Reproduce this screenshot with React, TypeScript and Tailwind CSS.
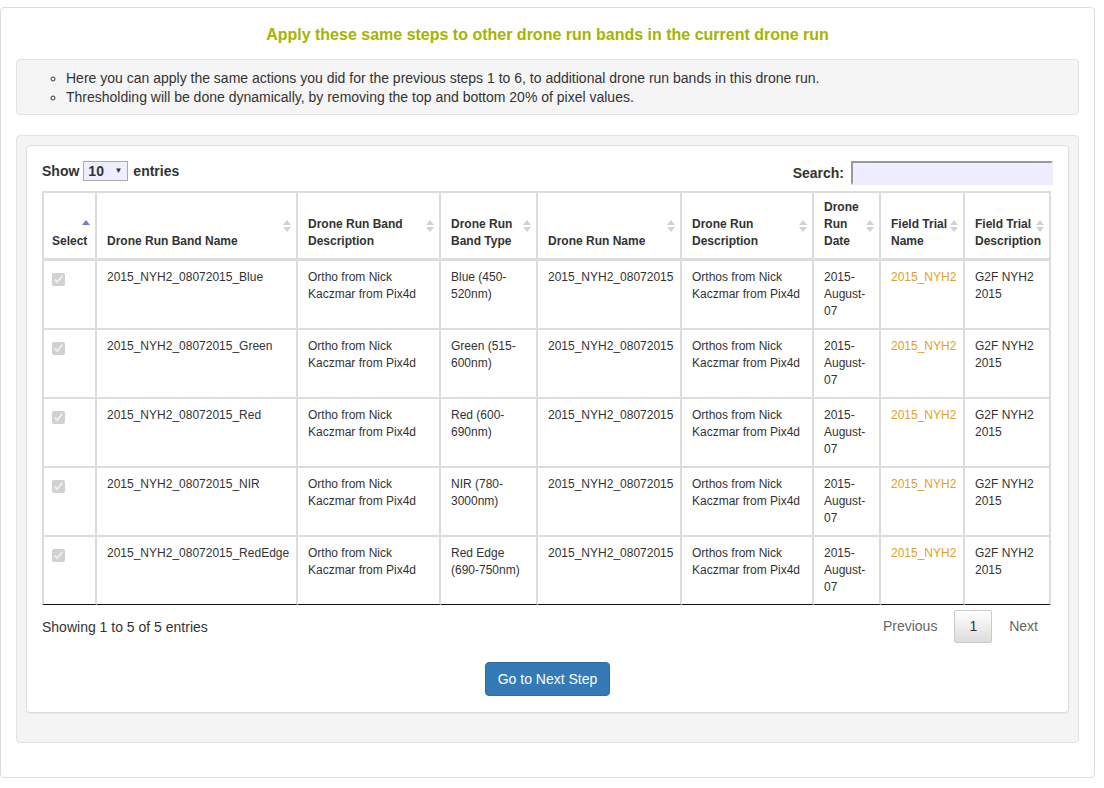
const bands = [
  { name: "2015_NYH2_08072015_Blue", type: "Blue (450-|520nm)" },
  { name: "2015_NYH2_08072015_Green", type: "Green (515-|600nm)" },
  { name: "2015_NYH2_08072015_Red", type: "Red (600-|690nm)" },
  { name: "2015_NYH2_08072015_NIR", type: "NIR (780-|3000nm)" },
  { name: "2015_NYH2_08072015_RedEdge", type: "Red Edge (690-|750nm)" },
];

const columns = [
  { label: "Select", width: "w-[55px]" },
  { label: "Drone Run Band Name", width: "w-[201px]" },
  { label: "Drone Run Band Description", width: "w-[143px]" },
  { label: "Drone Run Band Type", width: "w-[97px]" },
  { label: "Drone Run Name", width: "w-[144px]" },
  { label: "Drone Run Description", width: "w-[132px]" },
  { label: "Drone Run Date", width: "w-[67px]" },
  { label: "Field Trial Name", width: "w-[84px]" },
  { label: "Field Trial Description", width: "w-[86px]" },
];

// text with "|" marking where a line may break
function Breakable({ text }: { text: string }) {
  const parts = text.split("|");
  return (
    <>
      {parts.map((p, i) =>
        i < parts.length - 1 ? [p, <wbr key={i} />] : p
      )}
    </>
  );
}

function SortIcon({ asc }: { asc?: boolean }) {
  return (
    <svg
      width="10"
      height="15"
      viewBox="0 0 10 15"
      className="absolute right-[4px] top-1/2 -translate-y-1/2"
    >
      {asc ? (
        <path d="M1 6.5 L5 1.5 L9 6.5 Z" fill="#7579d4" />
      ) : (
        <>
          <path d="M1 6.5 L5 1.5 L9 6.5 Z" fill="#d2d2d2" />
          <path d="M1 8.5 L5 13.5 L9 8.5 Z" fill="#d2d2d2" />
        </>
      )}
    </svg>
  );
}

export default function App() {
  return (
    <div className="font-['Liberation_Sans',Arial,sans-serif] text-[#333] text-[14px] leading-[20px] pt-[7px]">
      <div className="w-[1095px] h-[771px] border border-[#ddd] rounded-[4px] bg-white px-[15px] pt-[17px]">
        <h3 className="text-center text-[16px] leading-[20px] font-bold text-[#a6b300] mb-[14px]">
          Apply these same steps to other drone run bands in the current drone run
        </h3>

        {/* info */}
        <div className="bg-[#f5f5f5] border border-[#e3e3e3] rounded-[4px] pt-[9px] pb-[7px] leading-[19px]">
          <ul className="list-[circle] pl-[49px]">
            <li>
              Here you can apply the same actions you did for the previous steps 1 to 6, to
              additional drone run bands in this drone run.
            </li>
            <li>
              Thresholding will be done dynamically, by removing the top and bottom 20% of pixel
              values.
            </li>
          </ul>
        </div>

        {/* table well */}
        <div className="mt-[20px] bg-[#f4f4f4] border border-[#e3e3e3] rounded-[4px] pt-[9px] pl-[9px] pr-[9px] pb-[29px]">
          <div className="bg-white border border-[#ddd] rounded-[4px] shadow-[0_1px_1px_rgba(0,0,0,0.05)] px-[15px] pt-[15px] pb-[16px]">
            <div className="flex justify-between items-start h-[24px]">
              <div className="flex items-center font-bold h-[20px] leading-[20px]">
                <span>Show</span>
                <div className="ml-[4px] w-[45px] h-[20px] border border-[#aaa] bg-[#eeeeff] flex items-center justify-between pl-[4px] pr-[5px]">
                  <span>10</span>
                  <span className="text-[8px] leading-none">▼</span>
                </div>
                <span className="ml-[5px]">entries</span>
              </div>
              <div className="flex items-center h-[24px]">
                <span className="font-bold mr-[7px]">Search:</span>
                <div className="w-[202px] h-[24px] bg-[#eeeeff] border-2 border-t-[#999] border-l-[#999] border-r-[#eeeeff] border-b-[#eeeeff]" />
              </div>
            </div>

            <table className="mt-[6px] w-[1009px] table-fixed border-separate border-spacing-0 text-[12px] leading-[17px]">
              <thead>
                <tr>
                  {columns.map((c, i) => (
                    <th
                      key={c.label}
                      className={`${c.width} relative border-t-2 border-r-2 border-b-[3px] border-[#ddd] pt-[6px] pb-[8px] pr-[8px] text-left align-bottom font-bold ${
                        i === 0 ? "border-l-2 pl-[8px]" : "pl-[10px]"
                      }`}
                    >
                      {c.label}
                      <SortIcon asc={i === 0} />
                    </th>
                  ))}
                </tr>
              </thead>
              <tbody>
                {bands.map((b, r) => {
                  const last = r === bands.length - 1;
                  const td = `align-top border-r-2 border-[#ddd] pt-[8px] pl-[10px] pr-[6px] ${
                    last ? "border-b border-b-[#111] pb-[8px]" : "border-b-2 pb-[8px]"
                  }`;
                  return (
                    <tr key={b.name}>
                      <td className={`${td} border-l-2 !pl-[8px]`}>
                        <input
                          type="checkbox"
                          checked
                          disabled
                          readOnly
                          className="block m-0 mt-[4px] w-[13px] h-[13px]"
                        />
                      </td>
                      <td className={td}>{b.name}</td>
                      <td className={td}>Ortho from Nick Kaczmar from Pix4d</td>
                      <td className={td}>
                        <Breakable text={b.type} />
                      </td>
                      <td className={td}>2015_NYH2_08072015</td>
                      <td className={td}>Orthos from Nick Kaczmar from Pix4d</td>
                      <td className={td}>
                        <Breakable text="2015-|August-|07" />
                      </td>
                      <td className={`${td} text-[#dfa126]`}>2015_NYH2</td>
                      <td className={td}>G2F NYH2 2015</td>
                    </tr>
                  );
                })}
              </tbody>
            </table>

            <div className="flex justify-between items-center mt-[5px]">
              <span>Showing 1 to 5 of 5 entries</span>
              <div className="flex items-center">
                <span className="px-[14px] py-[6px] border border-transparent text-[#666] leading-[19px]">
                  Previous
                </span>
                <span className="ml-[2px] px-[14px] py-[6px] border border-[#cacaca] rounded-[2px] bg-gradient-to-b from-white to-[#dcdcdc] leading-[19px]">
                  1
                </span>
                <span className="ml-[2px] px-[14px] py-[6px] border border-transparent text-[#666] leading-[19px]">
                  Next
                </span>
              </div>
            </div>

            <div className="flex justify-center mt-[19px]">
              <button className="bg-[#337ab7] border border-[#2e6da4] text-white rounded-[4px] px-[12px] py-[6px] leading-[20px]">
                Go to Next Step
              </button>
            </div>
          </div>
        </div>
      </div>
    </div>
  );
}
